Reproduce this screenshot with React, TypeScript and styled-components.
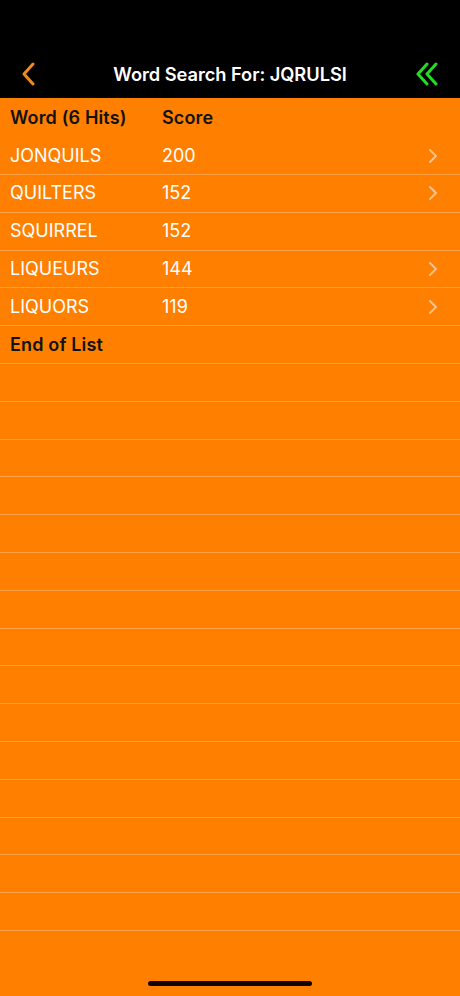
import React from "react";
import styled, { createGlobalStyle } from "styled-components";

const Global = createGlobalStyle`
  html, body { margin: 0; padding: 0; background: #ff8000; }
  body { font-family: Inter, "Liberation Sans", sans-serif; -webkit-font-smoothing: antialiased; }
`;

const Screen = styled.div`
  width: 460px;
  height: 996px;
  background: #ff8000;
  display: flex;
  flex-direction: column;
  position: relative;
  overflow: hidden;
`;

const NavBar = styled.header`
  height: 98px;
  background: #000;
  display: grid;
  grid-template-columns: 60px 1fr 60px;
  align-items: end;
  padding-bottom: 12px;
  box-sizing: border-box;
`;

const NavButton = styled.div<{ $align: "left" | "right" }>`
  display: flex;
  justify-content: ${(p) => (p.$align === "left" ? "flex-start" : "flex-end")};
  padding: ${(p) => (p.$align === "left" ? "0 0 0 20px" : "0 20px 0 0")};
  height: 24px;
  align-items: center;
`;

const Title = styled.h1`
  margin: 0;
  text-align: center;
  color: #fff;
  font-size: 18.3px;
  font-weight: 600;
  line-height: 24px;
  letter-spacing: -0.05px;
`;

const List = styled.div`
  display: flex;
  flex-direction: column;
`;

const Row = styled.div<{ $divider?: boolean; $head?: boolean }>`
  height: ${(p) => (p.$head ? "39.2px" : "37.8px")};
  box-sizing: border-box;
  display: grid;
  grid-template-columns: 152px 1fr 32px;
  align-items: center;
  padding-left: 10px;
  border-bottom: ${(p) => (p.$divider ? "1px solid rgba(255, 200, 150, 0.45)" : "none")};
`;

const Cell = styled.span<{ $bold?: boolean }>`
  font-size: 18px;
  line-height: 22px;
  color: ${(p) => (p.$bold ? "#111" : "#fff")};
  font-weight: ${(p) => (p.$bold ? 600 : 400)};
  letter-spacing: ${(p) => (p.$bold ? "0.15px" : "0")};
  white-space: nowrap;
`;

const Disclosure = styled.span`
  display: flex;
  align-items: center;
  justify-content: flex-start;
`;

const HomeIndicator = styled.div`
  position: absolute;
  left: 148px;
  bottom: 10px;
  width: 164px;
  height: 5px;
  border-radius: 3px;
  background: #120400;
`;

const BackIcon = () => (
  <svg width="16" height="24" viewBox="0 0 16 24">
    <path d="M13 2 L4 12 L13 22" fill="none" stroke="#f08a1c" strokeWidth="3" strokeLinecap="round" strokeLinejoin="round" />
  </svg>
);

const DoubleBackIcon = () => (
  <svg width="26" height="24" viewBox="0 0 26 24">
    <path d="M13 2 L4 12 L13 22" fill="none" stroke="#22dd22" strokeWidth="3" strokeLinecap="round" strokeLinejoin="round" />
    <path d="M22 2 L13 12 L22 22" fill="none" stroke="#22dd22" strokeWidth="3" strokeLinecap="round" strokeLinejoin="round" />
  </svg>
);

const ChevronRight = () => (
  <svg width="10" height="16" viewBox="0 0 10 16">
    <path d="M2 2 L8 8 L2 14" fill="none" stroke="#f7c493" strokeWidth="2" strokeLinecap="round" strokeLinejoin="round" />
  </svg>
);

const words: { word: string; score: number; more: boolean }[] = [
  { word: "JONQUILS", score: 200, more: true },
  { word: "QUILTERS", score: 152, more: true },
  { word: "SQUIRREL", score: 152, more: false },
  { word: "LIQUEURS", score: 144, more: true },
  { word: "LIQUORS", score: 119, more: true },
];

export default function App() {
  return (
    <Screen>
      <Global />
      <NavBar>
        <NavButton $align="left">
          <BackIcon />
        </NavButton>
        <Title>Word Search For: JQRULSI</Title>
        <NavButton $align="right">
          <DoubleBackIcon />
        </NavButton>
      </NavBar>
      <List>
        <Row $head>
          <Cell $bold>Word (6 Hits)</Cell>
          <Cell $bold>Score</Cell>
        </Row>
        {words.map((w) => (
          <Row key={w.word} $divider>
            <Cell>{w.word}</Cell>
            <Cell>{w.score}</Cell>
            <Disclosure>{w.more ? <ChevronRight /> : null}</Disclosure>
          </Row>
        ))}
        <Row $divider>
          <Cell $bold>End of List</Cell>
        </Row>
        {Array.from({ length: 15 }).map((_, i) => (
          <Row key={i} $divider />
        ))}
      </List>
      <HomeIndicator />
    </Screen>
  );
}
